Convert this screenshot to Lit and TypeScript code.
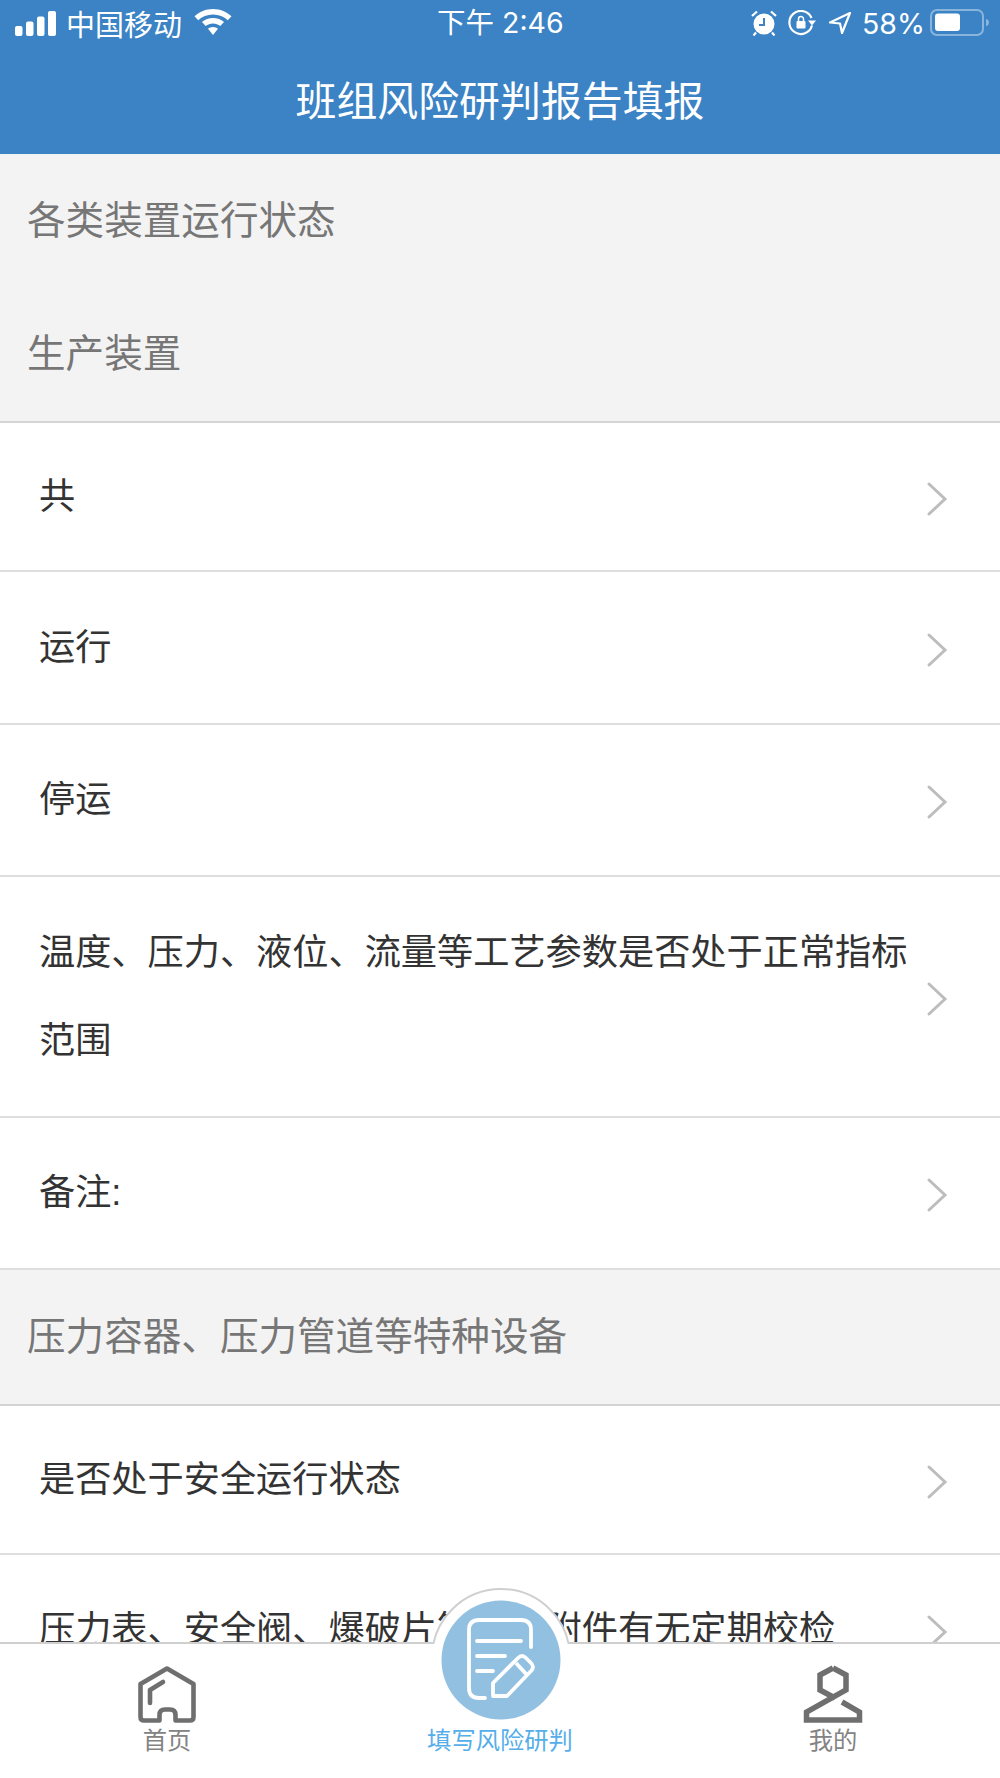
import { LitElement, html, css, svg } from 'lit';
import { customElement } from 'lit/decorators.js';

const chevron = svg`<path d="M3 3 L19 18 L3 33" fill="none" stroke="#bdbdbd" stroke-width="3" stroke-linecap="round" stroke-linejoin="miter"/>`;

@customElement('app-root')
export class AppRoot extends LitElement {
  static styles = css`
    :host {
      display: flex;
      flex-direction: column;
      width: 1000px;
      height: 1778px;
      overflow: hidden;
      background: #fff;
      font-family: 'Liberation Sans', 'Noto Sans CJK SC', sans-serif;
      color: #333;
    }
    .header {
      flex: none;
      height: 154px;
      background: #3b83c4;
      color: #fff;
      box-sizing: border-box;
    }
    .status {
      height: 46px;
      display: flex;
      align-items: center;
      justify-content: space-between;
      padding: 0 10px 0 15px;
      font-size: 29px;
      position: relative;
    }
    .status-side {
      display: flex;
      align-items: center;
    }
    .carrier {
      margin-left: 10px;
      margin-right: 12px;
    }
    .clock {
      position: absolute;
      left: 437px;
      top: 5px;
      font-family: Inter, 'Noto Sans CJK SC', sans-serif;
      font-size: 28.5px;
      line-height: 36px;
    }
    .percent {
      margin: 0 5px 0 10px;
      font-family: Inter, sans-serif;
      font-size: 28.5px;
    }
    .title {
      height: 108px;
      display: flex;
      align-items: center;
      justify-content: center;
      font-size: 40.9px;
      padding-bottom: 4px;
      box-sizing: border-box;
    }
    .content {
      flex: 1;
      min-height: 0;
      overflow: hidden;
    }
    .section {
      background: #f3f3f3;
      color: #767676;
      font-size: 38.6px;
      padding-left: 27px;
      border-bottom: 2px solid #d4d4d4;
    }
    .section-line {
      height: 134px;
      box-sizing: border-box;
      padding-bottom: 9px;
      display: flex;
      align-items: center;
    }
    .section-line.first {
      height: 133px;
      padding-bottom: 7px;
    }
    .row {
      display: flex;
      align-items: center;
      justify-content: space-between;
      box-sizing: border-box;
      padding: 0 52px 0 39px;
      border-bottom: 2px solid #dedede;
      font-size: 36.2px;
    }
    .row-text {
      width: 885px;
      line-height: 88px;
    }
    .row svg {
      flex: none;
      width: 22px;
      height: 36px;
      margin-top: 4px;
    }
    .footer {
      flex: none;
      position: relative;
      height: 134px;
      background: #fff;
      border-top: 2px solid #cfcfcf;
      display: grid;
      grid-template-columns: 334px 332px 334px;
      font-size: 24.3px;
      color: #838383;
    }
    .tab {
      display: flex;
      flex-direction: column;
      align-items: center;
      padding-top: 21px;
    }
    .tab svg {
      width: 60px;
      height: 58px;
      margin-bottom: -2px;
    }
    .tab.active {
      color: #55aeea;
      padding-top: 77px;
    }
    .fab-bump {
      position: absolute;
      left: 430.5px;
      top: -56px;
      width: 140px;
      height: 56px;
      overflow: hidden;
    }
    .fab-bump::before {
      content: '';
      position: absolute;
      left: 0;
      top: 0;
      width: 136px;
      height: 136px;
      border: 2px solid #cfcfcf;
      border-radius: 50%;
      background: #fff;
    }
    .fab {
      position: absolute;
      left: 440.5px;
      top: -44px;
      width: 120px;
      height: 120px;
    }
  `;

  private row(text: string, height: number) {
    return html`<div class="row" style="height:${height}px">
      <div class="row-text">${text}</div>
      <svg viewBox="0 0 22 36">${chevron}</svg>
    </div>`;
  }

  render() {
    return html`
      <div class="header">
        <div class="status">
          <div class="status-side">
            <svg width="41" height="25" viewBox="0 0 41 25" fill="#fff">
              <rect x="0" y="15" width="7.500" height="10" rx="2" />
              <rect x="11" y="10.500" width="7.500" height="14.500" rx="2" />
              <rect x="22" y="5.500" width="7.500" height="19.500" rx="2" />
              <rect x="33" y="0" width="8" height="25" rx="2" />
            </svg>
            <span class="carrier">中国移动</span>
            <svg width="38" height="28" viewBox="0 0 38 28" fill="#fff">
              <path d="M19 0C11.600 0 5.500 2.800 0.500 7.300L4.200 11.200C8.100 7.800 13.200 5.600 19 5.600C24.800 5.600 29.900 7.800 33.800 11.200L37.500 7.300C32.500 2.800 26.400 0 19 0Z" />
              <path d="M19 9C14.800 9 11 10.500 8 13L11.700 17C13.700 15.500 16.200 14.500 19 14.500C21.800 14.500 24.300 15.500 26.300 17L30 13C27 10.500 23.200 9 19 9Z" />
              <path d="M19 18C17 18 15.200 18.700 14 19.800L19 26L24 19.800C22.800 18.700 21 18 19 18Z" />
            </svg>
          </div>
          <div class="clock">下午 2:46</div>
          <div class="status-side">
            <svg width="26" height="26" viewBox="0 0 26 26" fill="#fff">
              <circle cx="13" cy="14" r="10.500" />
              <path d="M13 8V15H8" fill="none" stroke="#3b83c4" stroke-width="2" />
              <path d="M1 6L6 1.500M25 6L20 1.500M5 22.500L2.500 25.500M21 22.500L23.500 25.500" stroke="#fff" stroke-width="2.200" fill="none" />
            </svg>
            <svg style="margin-left:11px" width="28" height="26" viewBox="0 0 28 26" fill="none">
              <path d="M23.500 8A11.500 11.500 0 1 0 24 15.500" stroke="#fff" stroke-width="2.200" />
              <path d="M20 10.500H28L24 15.500Z" fill="#fff" />
              <rect x="8.500" y="11" width="9" height="7.500" rx="1" fill="#fff" />
              <path d="M10.500 11V9A2.500 2.500 0 0 1 15.500 9V11" stroke="#fff" stroke-width="1.500" />
            </svg>
            <svg style="margin-left:12px" width="24" height="24" viewBox="0 0 24 24" fill="none">
              <path d="M22 2L2 11.500L12 12.500L14 22Z" stroke="#fff" stroke-width="2.200" stroke-linejoin="round" />
            </svg>
            <span class="percent">58%</span>
            <svg width="60" height="28" viewBox="0 0 60 28" fill="none">
              <rect x="1" y="1" width="52" height="25" rx="6" stroke="#fff" stroke-opacity="0.4" stroke-width="2" />
              <rect x="5" y="4.500" width="25" height="17.500" rx="3" fill="#fff" />
              <path d="M56 10C58.500 10.500 59 12 59 13.500C59 15 58.500 16.500 56 17Z" fill="#fff" fill-opacity="0.4" />
            </svg>
          </div>
        </div>
        <div class="title">班组风险研判报告填报</div>
      </div>

      <div class="content">
        <div class="section">
          <div class="section-line first">各类装置运行状态</div>
          <div class="section-line">生产装置</div>
        </div>
        ${this.row('共', 149)}
        ${this.row('运行', 153)}
        ${this.row('停运', 152)}
        ${this.row('温度、压力、液位、流量等工艺参数是否处于正常指标范围', 241)}
        ${this.row('备注:', 152)}
        <div class="section">
          <div class="section-line">压力容器、压力管道等特种设备</div>
        </div>
        ${this.row('是否处于安全运行状态', 149)}
        ${this.row('压力表、安全阀、爆破片等安全附件有无定期校检', 151)}
      </div>

      <div class="footer">
        <div class="tab">
          <svg viewBox="0 0 60 58" fill="none" stroke="#6f6f6f" stroke-width="4.600">
            <path d="M30 3.500L3.500 19V52Q3.500 55.500 7 55.500H22.500V50Q22.500 44.500 28 44.500H33Q38.500 44.500 38.500 50V55.500H53Q56.500 55.500 56.500 52V19Z" stroke-linejoin="round" />
            <path d="M13 38V25L26 17" stroke-linecap="round" stroke-linejoin="round" />
          </svg>
          <span>首页</span>
        </div>
        <div class="tab active"><span>填写风险研判</span></div>
        <div class="tab">
          <svg viewBox="0 0 60 58" fill="none" stroke="#6f6f6f" stroke-width="5.500">
            <path d="M30 3L43 10V25L3.500 47V55H56.500V47L39 37" />
            <path d="M30 3L17 10V25L32 33" />
          </svg>
          <span>我的</span>
        </div>
        <div class="fab-bump"></div>
        <svg class="fab" viewBox="0 0 120 120" fill="none" stroke="#fff" stroke-width="3.800">
          <circle cx="60" cy="60" r="59.500" fill="#92c0e1" stroke="none" />
          <path d="M44 98H38Q28 98 28 88V30Q28 20 38 20H80Q90 20 90 30V47" stroke-linecap="round" />
          <path d="M36 41H80M36 56H64M36 71H52" stroke-linecap="round" />
          <path d="M52 96V83L77 58Q81 54 85 58L90 63Q94 67 90 71L66 96Z" stroke-linejoin="round" />
          <path d="M75 63L86 75" />
        </svg>
      </div>
    `;
  }
}
